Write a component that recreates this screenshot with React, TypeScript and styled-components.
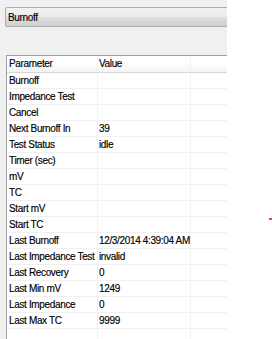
import React from "react";
import styled, { createGlobalStyle } from "styled-components";

const GlobalStyle = createGlobalStyle`
  html, body {
    margin: 0;
    padding: 0;
    background: #ffffff;
  }
  body {
    font-family: "Liberation Sans", Arial, sans-serif;
    font-size: 10px;
    letter-spacing: -0.35px;
    color: #000000;
    -webkit-text-stroke: 0.15px #000000;
  }
`;

const Window = styled.div`
  position: relative;
  width: 272px;
  height: 339px;
  overflow: hidden;
  background: #ffffff;
`;

const Panel = styled.div`
  width: 222px;
  height: 339px;
  padding-left: 5px;
  background: #f0f0f0;
  overflow: hidden;
`;

const Combo = styled.div`
  margin-top: 7px;
  width: 260px;
  height: 18px;
  border: 1px solid #acacac;
  border-radius: 2px;
  background: linear-gradient(#f2f2f2 0%, #ebebeb 48%, #dddddd 52%, #cfcfcf 100%);
  display: flex;
  align-items: center;
  padding-left: 2px;
`;

const Grid = styled.div`
  margin-top: 28px;
  margin-left: 1px;
  width: 260px;
  height: 300px;
  background: #ffffff;
  border-top: 1px solid #a0a0a0;
  border-left: 1px solid #a0a0a0;
`;

const Row = styled.div<{ $header?: boolean }>`
  display: grid;
  grid-template-columns: 91px 93px 1fr;
  height: ${(p) => (p.$header ? "17px" : "16px")};
  border-bottom: 1px solid ${(p) => (p.$header ? "#d5d5d5" : "#f0f0f0")};
  background: ${(p) =>
    p.$header ? "linear-gradient(#ffffff 0%, #ffffff 40%, #f3f4f6 100%)" : "#ffffff"};
  box-sizing: border-box;
`;

const Cell = styled.div<{ $pad?: number }>`
  display: flex;
  align-items: center;
  padding-left: ${(p) => p.$pad ?? 2}px;
  border-right: 1px solid #f0f0f0;
  white-space: nowrap;
  line-height: 1;
`;

const Mark = styled.div`
  position: absolute;
  left: 269px;
  top: 218px;
  width: 3px;
  height: 2px;
  background: #e8453c;
`;

const rows: [string, string][] = [
  ["Burnoff", ""],
  ["Impedance Test", ""],
  ["Cancel", ""],
  ["Next Burnoff In", "39"],
  ["Test Status", "idle"],
  ["Timer (sec)", ""],
  ["mV", ""],
  ["TC", ""],
  ["Start mV", ""],
  ["Start TC", ""],
  ["Last Burnoff", "12/3/2014 4:39:04 AM"],
  ["Last Impedance Test", "invalid"],
  ["Last Recovery", "0"],
  ["Last Min mV", "1249"],
  ["Last Impedance", "0"],
  ["Last Max TC", "9999"],
];

export default function App() {
  return (
    <>
      <GlobalStyle />
      <Window>
        <Panel>
          <Combo>Burnoff</Combo>
          <Grid>
            <Row $header>
              <Cell>Parameter</Cell>
              <Cell $pad={1}>Value</Cell>
              <Cell />
            </Row>
            {rows.map(([name, value]) => (
              <Row key={name}>
                <Cell>{name}</Cell>
                <Cell $pad={1}>{value}</Cell>
                <Cell />
              </Row>
            ))}
            <Row>
              <Cell />
              <Cell />
              <Cell />
            </Row>
          </Grid>
        </Panel>
        <Mark />
      </Window>
    </>
  );
}
